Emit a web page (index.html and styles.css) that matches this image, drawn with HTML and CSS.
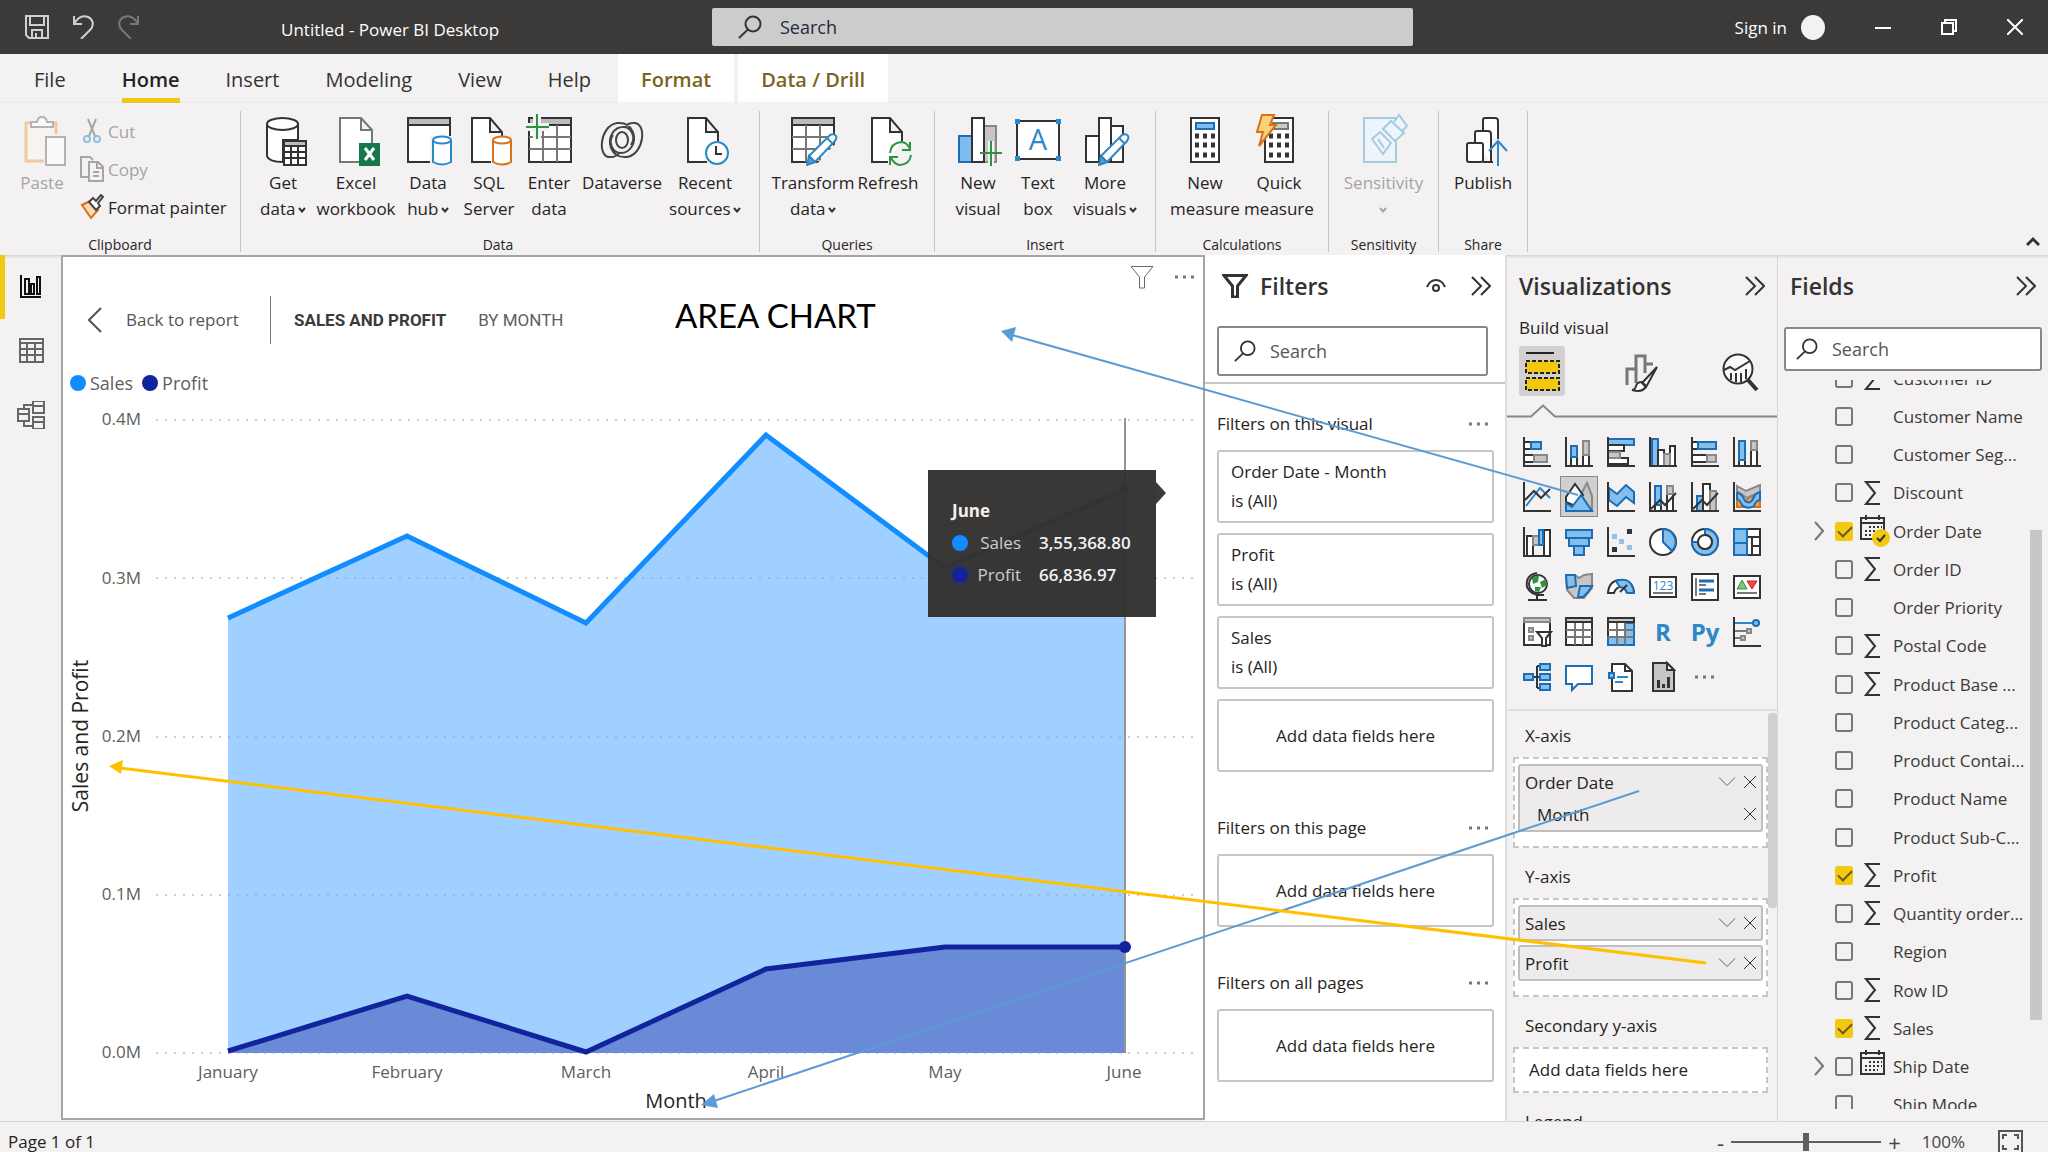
FILE: index.html
```html
<!DOCTYPE html>
<html lang="en">
<head>
    <meta charset="UTF-8">
    <meta name="viewport" content="width=device-width, initial-scale=1.0">
    <title>Untitled - Power BI Desktop</title>
    <link rel="stylesheet" href="styles.css">
</head>
<body>
    <!-- shared icons -->
    <svg class="sprite" aria-hidden="true">
        <symbol id="i-search" viewBox="0 0 24 24"><circle cx="15" cy="9" r="7.5"/><path d="M9.8 14.6 1 23"/></symbol>
        <symbol id="i-collapse" viewBox="0 0 20 20"><path d="M1 1l9 9-9 9M10 1l9 9-9 9"/></symbol>
        <symbol id="i-down" viewBox="0 0 18 12"><path d="M1 1.500l8 8 8-8"/></symbol>
        <symbol id="i-caret" viewBox="0 0 8 6"><path d="M1 1l3 3.500 3-3.500"/></symbol>
        <symbol id="i-x" viewBox="0 0 12 12"><path d="M0 0l12 12M12 0L0 12"/></symbol>
        <symbol id="i-more" viewBox="0 0 20 4"><path d="M0 .5h3v3H0zM8 .5h3v3H8zM16 .5h3v3h-3z"/></symbol>
        <symbol id="i-sigma" viewBox="0 0 18 24"><path d="M16 1H2l9 11-9 11h14"/></symbol>
        <symbol id="i-expand" viewBox="0 0 10 20"><path d="M1 1l8 9-8 9"/></symbol>
        <symbol id="i-funnel" viewBox="0 0 24 24"><path d="M1 1.500h22L14.500 12v11h-5V12z"/></symbol>
        <symbol id="i-calendar" viewBox="0 0 26 26">
            <path d="M1 3h23v21H1zM1 8h23M6 0v5M19 0v5"/>
            <path stroke-dasharray="2 2" d="M9 12h13M5 16h17M5 20h13"/>
        </symbol>
        <symbol id="i-pen" viewBox="0 0 32 34">
            <path fill="#fff" stroke="#2f86c6" stroke-width="2" d="M3 24 24 3q4-2 6 1 1 2-1 5L9 30z"/>
            <path fill="#5b9bd0" stroke="#2f86c6" stroke-width="2" d="M3 24l6 6-8 3z"/>
            <path fill="none" stroke="#2f86c6" stroke-width="2" d="M21 6l6 6"/>
        </symbol>
    </svg>

    <header class="titlebar">
        <div class="quick">
            <button aria-label="Save"><svg viewBox="0 0 24 24"><path d="M1 1h22v22H4l-3-3zM5 1v9h14V1M7 23v-8h10v8M11 18v5"/></svg></button>
            <button aria-label="Undo"><svg viewBox="0 0 24 24"><path d="M3 1v8h8M3 9C7 2 12 0 17 2c6 3 6 9 2 13l-9 9"/></svg></button>
            <button class="dim" aria-label="Redo"><svg viewBox="0 0 24 24"><path d="M21 1v8h-8M21 9C17 2 12 0 7 2c-6 3-6 9-2 13l9 9"/></svg></button>
        </div>
        <div class="doc-title">Untitled - Power BI Desktop</div>
        <label class="top-search">
            <svg><use href="#i-search"/></svg>
            <input type="text" placeholder="Search" aria-label="Search">
        </label>
        <div class="account">
            <button class="signin">Sign in <span class="avatar"></span></button>
            <button aria-label="Minimize"><svg viewBox="0 0 16 16"><path d="M0 9h16"/></svg></button>
            <button aria-label="Restore"><svg viewBox="0 0 16 16"><path d="M1 4h11v11H1zM4 4V1h11v11h-3"/></svg></button>
            <button aria-label="Close"><svg viewBox="0 0 16 16"><path d="M0 0l16 16M16 0L0 16"/></svg></button>
        </div>
    </header>

    <nav class="tabs">
        <a href="#" class="file">File</a>
        <a href="#" class="active"><span>Home</span></a>
        <a href="#">Insert</a>
        <a href="#">Modeling</a>
        <a href="#">View</a>
        <a href="#">Help</a>
        <a href="#" class="context">Format</a>
        <a href="#" class="context">Data / Drill</a>
    </nav>

    <div class="ribbon">
        <section class="group clipboard">
            <div class="tools">
                <button class="tool off">
                    <svg viewBox="0 0 48 52">
                        <path fill="#f7f3ee" stroke="#f0c9a0" stroke-width="3" d="M38 20V9H8v38h18"/>
                        <path fill="#fafafa" stroke="#b5b3b1" stroke-width="2" d="M13 13V8h6q1-5 5-5t5 5h6v5z"/>
                        <path fill="#fafafa" stroke="#b5b3b1" stroke-width="2" d="M28 23h19v28H28z"/>
                    </svg>
                    <span>Paste</span>
                </button>
                <div class="stack">
                    <button class="off"><svg viewBox="0 0 24 26"><path stroke="#a8a6a4" d="M8 1l7 17M16 1L9 18"/><g stroke="#8fc0e4"><circle cx="7" cy="21" r="3"/><circle cx="17" cy="21" r="3"/></g></svg>Cut</button>
                    <button class="off"><svg viewBox="0 0 24 26"><path stroke="#a8a6a4" d="M9 21H1V1h9l3 3M9 6h9l5 5v14H9zM17 6v6h6M13 16h6M13 20h6"/></svg>Copy</button>
                    <button><svg viewBox="0 0 24 26"><path fill="#fbd9b4" stroke="#d9701a" stroke-width="2" d="M2 11l8-4 8 9-7 8z"/><path fill="#fff" stroke="#444" d="M9 8l4-4 3 3 5-6 2 2-5 6 2 3-4 4z"/></svg>Format painter</button>
                </div>
            </div>
            <h3>Clipboard</h3>
        </section>

        <section class="group data">
            <div class="tools">
                <button class="tool">
                    <svg viewBox="0 0 48 52">
                        <g class="ln"><path d="M8 10v32q2 6 16 6V26h15V10"/><ellipse cx="23.500" cy="10" rx="15.500" ry="6"/></g>
                        <path fill="#fff" stroke="#333" stroke-width="2" d="M25 27h22v24H25zM25 38h22M25 44h22M32 32v19M39 32v19"/><path fill="#bbb" stroke="#333" stroke-width="2" d="M25 27h22v5H25z"/>
                    </svg>
                    <span>Get<br>data <svg class="caret"><use href="#i-caret"/></svg></span>
                </button>
                <button class="tool">
                    <svg viewBox="0 0 48 52">
                        <path fill="#fff" stroke="#777" stroke-width="2" d="M27 48H8V4h21l11 12v13M29 4v12h11"/>
                        <path fill="#14794a" stroke="none" d="M27 29h21v23H27z"/><path stroke="#fff" stroke-width="3" d="M33 34l9 12M42 34l-9 12"/>
                    </svg>
                    <span>Excel<br>workbook</span>
                </button>
                <button class="tool">
                    <svg viewBox="0 0 48 52">
                        <g class="ln"><path d="M4 4h42v44H4z"/><path fill="#bbb" d="M4 4h42v7H4z"/></g>
                        <path fill="#fff" stroke="#f3f1f1" stroke-width="6" d="M29 25h18v26H29z"/>
                        <path fill="#fff" stroke="#2b88c9" stroke-width="2" d="M29 26v22q9 5 18 0V26"/><ellipse cx="38" cy="26" rx="9" ry="3.500" fill="#fff" stroke="#2b88c9" stroke-width="2"/>
                    </svg>
                    <span>Data<br>hub <svg class="caret"><use href="#i-caret"/></svg></span>
                </button>
                <button class="tool">
                    <svg viewBox="0 0 48 52">
                        <g class="ln"><path d="M26 48H7V4h18l12 14v4M25 4v14h12"/></g>
                        <path fill="#fff" stroke="#d9701a" stroke-width="2" d="M28 26v22q9 5 18 0V26"/><ellipse cx="37" cy="26" rx="9" ry="3.500" fill="#fff" stroke="#d9701a" stroke-width="2"/>
                    </svg>
                    <span>SQL<br>Server</span>
                </button>
                <button class="tool">
                    <svg viewBox="0 0 48 52">
                        <g class="ln"><path d="M4 4h42v44H4z"/><path fill="#bbb" d="M4 4h42v7H4z"/><path stroke="#777" d="M4 23h42M4 35h42M18 11v37M32 11v37"/></g>
                        <path stroke="#f3f1f1" stroke-width="8" d="M12 0v25M0 13h24"/>
                        <path stroke="#2c9342" stroke-width="2" d="M12 0v25M1 13h23"/>
                    </svg>
                    <span>Enter<br>data</span>
                </button>
                <button class="tool">
                    <svg viewBox="0 0 48 52">
                        <g fill="none" stroke="#444" stroke-width="2">
                            <ellipse cx="24" cy="26" rx="6" ry="8"/>
                            <path d="M13 43C-1 45 1 12 19 9q12-1 16 9c4 12-4 21-12 21-9 0-13-11-8-18M35 9c14-2 12 31-6 34q-12 1-16-9C9 22 17 13 25 13c9 0 13 11 8 18M13 43q5 0 8-4M35 9q-5 0-8 4"/>
                        </g>
                    </svg>
                    <span>Dataverse</span>
                </button>
                <button class="tool">
                    <svg viewBox="0 0 48 52">
                        <g class="ln"><path d="M26 48H7V4h18l12 14v9M25 4v14h12"/></g>
                        <circle cx="36" cy="39" r="11" fill="#fff" stroke="#2b88c9" stroke-width="2"/><path fill="none" stroke="#333" stroke-width="2" d="M35 32v8h6"/>
                    </svg>
                    <span>Recent<br>sources <svg class="caret"><use href="#i-caret"/></svg></span>
                </button>
            </div>
            <h3>Data</h3>
        </section>

        <section class="group queries">
            <div class="tools">
                <button class="tool">
                    <svg viewBox="0 0 48 52">
                        <g class="ln"><path d="M3 4h42v44H3z"/><path fill="#bbb" d="M3 4h42v7H3z"/><path stroke="#777" d="M3 23h42M3 35h42M17 11v37M31 11v37"/></g>
                        <path fill="#f3f1f1" stroke="none" d="M26 52 48 28v24z"/>
                        <use href="#i-pen" x="17" y="18" width="32" height="34"/>
                    </svg>
                    <span>Transform<br>data <svg class="caret"><use href="#i-caret"/></svg></span>
                </button>
                <button class="tool">
                    <svg viewBox="0 0 48 52">
                        <g class="ln"><path d="M24 48H8V4h18l12 14v9M26 4v14h12"/></g>
                        <path fill="none" stroke="#2c9342" stroke-width="2" d="M26 39q1-10 11-11 6 0 9 7M46 28v8h-8M47 41q-1 9-11 10-5 0-9-7M26 51v-8h8"/>
                    </svg>
                    <span>Refresh</span>
                </button>
            </div>
            <h3>Queries</h3>
        </section>

        <section class="group insert">
            <div class="tools">
                <button class="tool">
                    <svg viewBox="0 0 48 52">
                        <path fill="#7dbcee" stroke="#1b6eb5" stroke-width="2" d="M5 22h13v26H5z"/>
                        <path fill="#c8c6c4" stroke="#8a8886" stroke-width="2" d="M30 12h12v36H30z"/>
                        <path fill="#fff" stroke="#333" stroke-width="2" d="M18 4h12v44H18z"/>
                        <path stroke="#f3f1f1" stroke-width="6" d="M37 27v24"/><path stroke="#2c9342" stroke-width="2" d="M37 27v25M26 39h22"/>
                    </svg>
                    <span>New<br>visual</span>
                </button>
                <button class="tool">
                    <svg viewBox="0 0 48 52">
                        <g class="ln"><path d="M3 7h42v38H3z"/></g>
                        <path fill="#2b88c9" stroke="none" d="M1 5h5v5H1zM42 5h5v5h-5zM1 42h5v5H1zM42 42h5v5h-5z"/>
                        <text x="24" y="36" text-anchor="middle" font-size="29" fill="#2b88c9">A</text>
                    </svg>
                    <span>Text<br>box</span>
                </button>
                <button class="tool">
                    <svg viewBox="0 0 48 52">
                        <g class="ln"><path d="M5 22h13v26H5zM30 12h12v36H30zM18 4h12v44H18z"/></g>
                        <use href="#i-pen" x="17" y="18" width="32" height="34"/>
                    </svg>
                    <span>More<br>visuals <svg class="caret"><use href="#i-caret"/></svg></span>
                </button>
            </div>
            <h3>Insert</h3>
        </section>

        <section class="group calc">
            <div class="tools">
                <button class="tool">
                    <svg viewBox="0 0 48 52">
                        <g class="ln"><path d="M10 4h28v44H10z"/></g>
                        <path fill="#7dbcee" stroke="#1b6eb5" stroke-width="2" d="M15 9h18v6H15z"/>
                        <path stroke="#333" stroke-width="5" stroke-dasharray="4 4" d="M14 22h20M14 31h20M14 41h20"/>
                    </svg>
                    <span>New<br>measure</span>
                </button>
                <button class="tool">
                    <svg viewBox="0 0 48 52">
                        <g class="ln"><path d="M10 4h28v44H10z"/></g>
                        <path fill="#ccc" stroke="#777" stroke-width="2" d="M18 9h15v6H18z"/>
                        <path stroke="#333" stroke-width="5" stroke-dasharray="4 4" d="M14 22h20M14 31h20M14 41h20"/>
                        <path fill="#fbd27a" stroke="#d9701a" stroke-width="2" d="M7 1h12l-4 10h6L4 32l4-14H2z"/>
                    </svg>
                    <span>Quick<br>measure</span>
                </button>
            </div>
            <h3>Calculations</h3>
        </section>

        <section class="group sensitivity">
            <div class="tools">
                <button class="tool off">
                    <svg viewBox="0 0 48 52">
                        <g fill="#eef5fa" stroke="#a5cbe2" stroke-width="2">
                            <path d="M4 4h32v44H4z"/><path d="M23 15l8-8 13 12-9 8zM34 8l5-7 8 11-5 5M20 18l11 11-8 11-11-15zM18 25l6 9"/>
                        </g>
                    </svg>
                    <span>Sensitivity<br><svg class="caret"><use href="#i-caret"/></svg></span>
                </button>
            </div>
            <h3>Sensitivity</h3>
        </section>

        <section class="group share">
            <div class="tools">
                <button class="tool">
                    <svg viewBox="0 0 48 52">
                        <g class="ln"><path d="M24 17V6q0-2 2-2h10q3 0 3 3v18M16 29V19q0-2 2-2h11q3 0 3 3v28"/><rect x="8" y="29" width="16" height="19" rx="2"/><path d="M24 48h10"/></g>
                        <path stroke="#f3f1f1" stroke-width="6" d="M39 30v22"/><path fill="none" stroke="#2b88c9" stroke-width="2" d="M39 52V27M30 37l9-10 9 10"/>
                    </svg>
                    <span>Publish</span>
                </button>
            </div>
            <h3>Share</h3>
        </section>
        <button class="fold" aria-label="Collapse ribbon"><svg viewBox="0 0 14 10"><path d="M1 9l6-6 6 6"/></svg></button>
    </div>

    <main class="workspace">
        <aside class="rail">
            <button class="on" aria-label="Report view"><svg viewBox="0 0 28 28"><path d="M4 2v22h20"/><path d="M8 6h4v15H8zM14 11h3v10h-3zM20 4h3v17h-3z"/></svg></button>
            <button aria-label="Data view"><svg viewBox="0 0 28 28"><path d="M3 2h23v23H3zM3 6h23M3 12h23M3 18h23M10 6v19M18 6v19"/></svg></button>
            <button aria-label="Model view"><svg viewBox="0 0 28 28"><path d="M16 0h11v12H16zM16 5h11M16 16h11v12H16zM16 21h11M1 8h11v12H1zM1 13h11M7 8V4h9M7 20v5h9"/></svg></button>
        </aside>

        <section class="canvas">
            <div class="visual-tools">
                <button aria-label="Filters on visual"><svg class="funnel"><use href="#i-funnel"/></svg></button>
                <button aria-label="More options"><svg class="more"><use href="#i-more"/></svg></button>
            </div>
            <div class="focus-head">
                <button class="back"><svg viewBox="0 0 14 26"><path d="M13 1L1 13l12 12"/></svg>Back to report</button>
                <div class="crumbs"><b>SALES AND PROFIT</b><span>BY MONTH</span></div>
                <h1>AREA CHART</h1>
            </div>
            <div class="legend"><i class="sales"></i>Sales <i class="profit"></i>Profit</div>
            <div class="plot">
                <svg class="chart" viewBox="63 400 1140 718" role="img" aria-label="Sales and Profit by Month">
                    <path class="area-sales" d="M228 618 407 536 586 623 766 435 945 568 1124 490V1053H228z"/>
                    <path class="area-profit" d="M228 1051 407 996 586 1052 766 969 945 947H1124V1053H228z"/>
                    <path class="grid" d="M156 420H1196M156 578H1196M156 737H1196M156 895H1196M156 1053H1196"/>
                    <path class="hover-line" d="M1125 418V1053"/>
                    <path class="line-sales" d="M228 618 407 536 586 623 766 435 945 568 1124 490"/>
                    <path class="line-profit" d="M228 1051 407 996 586 1052 766 969 945 947H1124"/>
                    <circle cx="1124" cy="490" r="5" fill="#118dff"/>
                    <circle cx="1125" cy="947" r="6" fill="#12239e"/>
                    <g class="ticks" text-anchor="end">
                        <text x="141" y="425">0.4M</text>
                        <text x="141" y="584">0.3M</text>
                        <text x="141" y="742">0.2M</text>
                        <text x="141" y="900">0.1M</text>
                        <text x="141" y="1058">0.0M</text>
                    </g>
                    <g class="ticks" text-anchor="middle">
                        <text x="228" y="1078">January</text>
                        <text x="407" y="1078">February</text>
                        <text x="586" y="1078">March</text>
                        <text x="766" y="1078">April</text>
                        <text x="945" y="1078">May</text>
                        <text x="1124" y="1078">June</text>
                    </g>
                    <text class="axis" text-anchor="middle" x="676" y="1108">Month</text>
                    <text class="axis y" text-anchor="middle" transform="translate(88 736) rotate(-90)">Sales and Profit</text>
                </svg>
                <div class="tooltip">
                    <strong>June</strong>
                    <dl>
                        <dt><i class="sales"></i>Sales</dt><dd>3,55,368.80</dd>
                        <dt><i class="profit"></i>Profit</dt><dd>66,836.97</dd>
                    </dl>
                </div>
            </div>
        </section>

        <aside class="filters">
            <div class="pane-head">
                <svg class="funnel"><use href="#i-funnel"/></svg>
                <h2>Filters</h2>
                <button aria-label="Preview"><svg class="eye" viewBox="0 0 20 14"><path d="M1 8q3-7 9-7t9 7"/><circle cx="10" cy="9" r="3"/></svg></button>
                <button aria-label="Collapse filters"><svg class="collapse"><use href="#i-collapse"/></svg></button>
            </div>
            <label class="search"><svg><use href="#i-search"/></svg><input type="text" placeholder="Search" aria-label="Search filters"></label>
            <div class="filter-list">
                <h4>Filters on this visual <svg class="more"><use href="#i-more"/></svg></h4>
                <div class="card">Order Date - Month<br>is (All)</div>
                <div class="card">Profit<br>is (All)</div>
                <div class="card">Sales<br>is (All)</div>
                <div class="card add">Add data fields here</div>
                <h4>Filters on this page <svg class="more"><use href="#i-more"/></svg></h4>
                <div class="card add">Add data fields here</div>
                <h4>Filters on all pages <svg class="more"><use href="#i-more"/></svg></h4>
                <div class="card add">Add data fields here</div>
            </div>
        </aside>

        <aside class="visuals">
            <div class="pane-head">
                <h2>Visualizations</h2>
                <button aria-label="Collapse visualizations"><svg class="collapse"><use href="#i-collapse"/></svg></button>
            </div>
            <div class="sub">Build visual</div>
            <div class="modes">
                <button class="on" aria-label="Build visual"><svg viewBox="0 0 40 44"><path stroke="#222" stroke-width="2" d="M4 4h28"/><path fill="#f2c811" stroke="#222" stroke-width="2" stroke-dasharray="4 2" d="M4 12h33v12H4zM4 29h33v12H4z"/></svg></button>
                <button aria-label="Format visual"><svg viewBox="0 0 40 44"><path fill="none" stroke="#777" stroke-width="3" d="M6 36V20h9V7h9v8h8M15 20v14M24 15v9"/><path fill="#fff" stroke="#333" stroke-width="2" d="M36 18 21 34l4 4zM21 33q-5 0-6 4-1 4-4 4 11 3 14-4z"/></svg></button>
                <button aria-label="Analytics"><svg viewBox="0 0 40 44"><circle cx="18" cy="20" r="14.500" fill="#fafafa" stroke="#333" stroke-width="2"/><path stroke="#333" stroke-width="4" d="M28 31l9 10"/><path fill="none" stroke="#333" stroke-width="2" d="M4 21l6-3 5 3 15-9M11 31v-7M16 33V24M21 33V24M26 30V20"/></svg></button>
            </div>
            <svg class="notch" viewBox="0 0 270 14" preserveAspectRatio="xMinYMin slice"><path d="M0 12.500h24l12-11 12 11h252"/></svg>
            <div class="gallery">
                <button aria-label="Stacked bar chart"><svg viewBox="0 0 28 30"><path class="w" d="M1 5h8v7H1zM1 18h11v7H1z"/><path class="b" d="M8 5h10v7H8z"/><path class="g" d="M11 18h13v7H11z"/><path class="a" d="M1 0v29h27"/></svg></button>
                <button aria-label="Stacked column chart"><svg viewBox="0 0 28 30"><path class="w" d="M6 20h6v9H6zM18 17h6v12h-6z"/><path class="b" d="M6 9h6v11H6z"/><path class="g" d="M18 4h6v14h-6z"/><path class="a" d="M1 0v29h27"/></svg></button>
                <button aria-label="Clustered bar chart"><svg viewBox="0 0 28 30"><path class="b" d="M1 2h26v6H1z"/><path class="w" d="M1 8h16v6H1zM1 21h20v6H1z"/><path class="g" d="M1 15h12v6H1z"/><path class="a" d="M1 0v29h27"/></svg></button>
                <button aria-label="Clustered column chart"><svg viewBox="0 0 28 30"><path class="b" d="M3 2h6v27H3z"/><path class="w" d="M9 13h6v16H9zM21 9h5v20h-5z"/><path class="g" d="M15 17h6v12h-6z"/><path class="a" d="M1 0v29h27"/></svg></button>
                <button aria-label="100% stacked bar chart"><svg viewBox="0 0 28 30"><path class="w" d="M1 5h7v7H1zM1 18h16v7H1z"/><path class="b" d="M7 5h18v7H7z"/><path class="g" d="M16 18h9v7h-9z"/><path class="a" d="M1 0v29h27"/></svg></button>
                <button aria-label="100% stacked column chart"><svg viewBox="0 0 28 30"><path class="w" d="M6 22h6v7H6zM18 12h6v17h-6z"/><path class="b" d="M6 4h6v19H6z"/><path class="g" d="M18 4h6v9h-6z"/><path class="a" d="M1 0v29h27"/></svg></button>

                <button aria-label="Line chart"><svg viewBox="0 0 28 30"><path class="bl" d="M3 24 17 6l10 10"/><path class="a" d="M1 0v29h27M2 18l9-9 7 7 9-9"/></svg></button>
                <button class="on" aria-label="Area chart"><svg viewBox="0 0 28 30"><path class="g" d="M14 16l8-15 5 13v14z"/><path class="w" d="M1 15 10 2l8 11-8 11-9-4z"/><path class="b" d="M1 21l6 4 9-12 11 16H1z"/></svg></button>
                <button aria-label="Stacked area chart"><svg viewBox="0 0 28 30"><path class="b" d="M2 6l8 6 9-9 8 7v11l-8-6-9 9-8-6z"/><path class="a" d="M1 0v29h27"/></svg></button>
                <button aria-label="Line and stacked column chart"><svg viewBox="0 0 28 30"><path class="w" d="M6 20h6v9H6zM18 12h6v17h-6z"/><path class="b" d="M6 4h6v19H6z"/><path class="g" d="M18 4h6v8h-6z"/><path class="a" d="M1 0v29h27M2 27l9-9 5 5 11-12"/></svg></button>
                <button aria-label="Line and clustered column chart"><svg viewBox="0 0 28 30"><path class="b" d="M6 14h6v15H6z"/><path class="w" d="M12 2h7v27h-7z"/><path class="g" d="M19 9h6v20h-6z"/><path class="a" d="M1 0v29h27M2 27l9-9 5 5 11-12"/></svg></button>
                <button aria-label="Ribbon chart"><svg viewBox="0 0 28 30"><path fill="#f0a14a" stroke="#d9701a" stroke-width="2" d="M4 15l6 6 8-7 9 6v5H4z"/><path class="g" d="M4 4l9 5 14-6v7l-13 6L4 9z"/><path class="b" d="M4 11q5 0 8 8 5 4 8-2 2-6 7-7v8q-4 0-6 6-7 4-12-1-3-6-5-6z"/><path class="a" d="M1 0v29h27"/></svg></button>

                <button aria-label="Waterfall chart"><svg viewBox="0 0 28 30"><path class="w" d="M4 9h6v20H4zM21 3h6v26h-6z"/><path class="g" d="M10 9h6v9h-6z"/><path class="b" d="M16 3h4v15h-4z"/><path class="a" d="M1 0v29h27"/></svg></button>
                <button aria-label="Funnel"><svg viewBox="0 0 28 30"><path class="b" d="M1 3h26v8H1zM4 11h20v8H4zM9 19h10v9H9z"/></svg></button>
                <button aria-label="Scatter chart"><svg viewBox="0 0 28 30"><path fill="#8fc3ec" stroke="none" d="M5 7h5v5H5zM12 12h5v5h-5zM20 18h5v5h-5z"/><path fill="#333" stroke="none" d="M20 2h5v5h-5zM5 20h5v5H5z"/><path class="a" d="M1 0v29h27"/></svg></button>
                <button aria-label="Pie chart"><svg viewBox="0 0 28 30"><circle class="w" cx="14" cy="15" r="13"/><path class="b" d="M14 2a13 13 0 0 1 9 22l-9-9z"/></svg></button>
                <button aria-label="Donut chart"><svg viewBox="0 0 28 30"><circle class="w" cx="14" cy="15" r="13"/><path class="b" d="M14 2a13 13 0 1 1-13 13h6a7 7 0 1 0 7-7z"/><circle class="w" cx="14" cy="15" r="7"/></svg></button>
                <button aria-label="Treemap"><svg viewBox="0 0 28 30"><path class="w" d="M1 2h26v26H1zM14 10h13M19 10v18M19 19h8"/><path class="b" d="M1 2h13v26H1zM1 16h13"/></svg></button>

                <button aria-label="Map"><svg viewBox="0 0 28 30"><circle class="w" cx="15" cy="12" r="9"/><path fill="#2c9342" stroke="none" d="M9 6l7-3-1 7-5 2zM17 10l6-3 1 6-5 3zM12 15l6 0-2 5-4-1z"/><path class="a" d="M14 1Q2 3 4 15q4 9 17 8M14 22v6M5 28h19"/></svg></button>
                <button aria-label="Filled map"><svg viewBox="0 0 28 30"><path class="g" d="M1 3h9l4 3 5-3 8-1v14l-8 10H9L2 18z"/><path class="b" d="M1 3h9l1 11-9 2zM15 14h12l-4 6-5 5h-5z"/></svg></button>
                <button aria-label="Gauge"><svg viewBox="0 0 28 30"><path class="w" d="M1 21Q2 8 14 8q12 0 13 13h-7q-2-6-6-6-5 0-7 6z"/><path class="b" d="M9 9q16-5 18 12h-7q-2-6-7-6z"/><path class="a" d="M13 20l7-7"/></svg></button>
                <button aria-label="Card"><svg viewBox="0 0 28 30"><path class="w" d="M1 5h26v20H1z"/><text x="14" y="18" text-anchor="middle" font-size="12" fill="#2b88c9">123</text><path class="gl" d="M4 21h20"/></svg></button>
                <button aria-label="Multi-row card"><svg viewBox="0 0 28 30"><path class="w" d="M1 2h26v26H1z"/><path class="gl" d="M5 6v18M8 13h7M8 22h7"/><path stroke="#1b6eb5" stroke-width="3" d="M8 9h15M8 18h15"/></svg></button>
                <button aria-label="KPI"><svg viewBox="0 0 28 30"><path class="w" d="M1 4h26v22H1z"/><path fill="#7cc68a" stroke="#2c9342" d="M4 17l5-9 5 9z"/><path fill="#f04a4a" stroke="#c22" d="M14 9h10l-5 8z"/><path class="gl" d="M4 21h20"/></svg></button>

                <button aria-label="Slicer"><svg viewBox="0 0 28 30"><path class="w" d="M1 1h26v27H1z"/><path class="g" d="M1 1h26v4H1zM6 11h4v4H6zM6 19h4v4H6z"/><path class="w" d="M14 15h14l-5 6v8h-4v-8z"/></svg></button>
                <button aria-label="Table"><svg viewBox="0 0 28 30"><path class="w" d="M1 1h26v27H1z"/><path class="gl" d="M1 13h26M1 20h26M10 5v23M18 5v23"/><path class="a g" d="M1 1h26v4H1z"/></svg></button>
                <button aria-label="Matrix"><svg viewBox="0 0 28 30"><path class="w" d="M1 1h26v27H1z"/><path class="b" d="M18 6h9v22H1v-8h17z"/><path class="gl" d="M1 13h26M1 20h26M10 5v23M18 5v23"/><path class="a g" d="M1 1h26v4H1z"/></svg></button>
                <button class="glyph" aria-label="R script visual">R</button>
                <button class="glyph" aria-label="Python visual">Py</button>
                <button aria-label="Key influencers"><svg viewBox="0 0 28 30"><path class="bl" d="M2 6h18"/><circle class="b" cx="23" cy="6" r="3"/><path class="gl" d="M2 14h12M2 21h7"/><path class="g" d="M14 12h4v4h-4zM8 19h4v4H8z"/><path class="a" d="M1 0v29h27"/></svg></button>

                <button aria-label="Decomposition tree"><svg viewBox="0 0 28 30"><path class="a" d="M10 15h7M14 4v22M14 4h3M14 26h3"/><path class="b" d="M1 12h9v6H1zM17 2h10v6H17zM17 12h10v6H17zM17 22h10v6H17z"/></svg></button>
                <button aria-label="Q&amp;A"><svg viewBox="0 0 28 30"><path fill="#fff" stroke="#1b6eb5" stroke-width="2" d="M1 4h26v18H13l-6 6v-6H1z"/></svg></button>
                <button aria-label="Smart narrative"><svg viewBox="0 0 28 30"><path class="w" d="M5 2h13l7 7v20H5z"/><path class="a" d="M18 2v7h7"/><path class="b" d="M2 11h5v5H2z"/><path class="bl" d="M10 15h11M8 20h8"/></svg></button>
                <button aria-label="Paginated report"><svg viewBox="0 0 28 30"><path class="a g" d="M4 1h14l7 7v21H4z"/><path class="w" d="M18 1v7h7z"/><path fill="#333" stroke="none" d="M8 18h3v8H8zM13 22h3v4h-3zM18 15h3v11h-3z"/></svg></button>
                <button aria-label="Get more visuals"><svg class="more"><use href="#i-more"/></svg></button>
            </div>
            <div class="wells">
                <h4>X-axis</h4>
                <div class="well">
                    <div class="pill">
                        <div><span>Order Date</span><svg class="down"><use href="#i-down"/></svg><svg class="x"><use href="#i-x"/></svg></div>
                        <div class="child"><span>Month</span><svg class="x"><use href="#i-x"/></svg></div>
                    </div>
                </div>
                <h4>Y-axis</h4>
                <div class="well">
                    <div class="pill"><div><span>Sales</span><svg class="down"><use href="#i-down"/></svg><svg class="x"><use href="#i-x"/></svg></div></div>
                    <div class="pill"><div><span>Profit</span><svg class="down"><use href="#i-down"/></svg><svg class="x"><use href="#i-x"/></svg></div></div>
                </div>
                <h4>Secondary y-axis</h4>
                <div class="well empty">Add data fields here</div>
                <h4>Legend</h4>
                <div class="thumb"></div>
            </div>
        </aside>

        <aside class="fields">
            <div class="pane-head">
                <h2>Fields</h2>
                <button aria-label="Collapse fields"><svg class="collapse"><use href="#i-collapse"/></svg></button>
            </div>
            <label class="search"><svg><use href="#i-search"/></svg><input type="text" placeholder="Search" aria-label="Search fields"></label>
            <div class="field-list">
                <ul>
                    <li><label><input type="checkbox"><svg class="sigma"><use href="#i-sigma"/></svg><span>Customer ID</span></label></li>
                    <li><label><input type="checkbox"><i></i><span>Customer Name</span></label></li>
                    <li><label><input type="checkbox"><i></i><span>Customer Seg...</span></label></li>
                    <li><label><input type="checkbox"><svg class="sigma"><use href="#i-sigma"/></svg><span>Discount</span></label></li>
                    <li class="parent"><svg class="expand"><use href="#i-expand"/></svg><label><input type="checkbox" checked><svg class="cal" viewBox="0 0 30 32"><use href="#i-calendar" width="26" height="26"/><circle cx="21" cy="23" r="9" fill="#f2c811" stroke="none"/><path d="M17 23l3 3 5-6"/></svg><span>Order Date</span></label></li>
                    <li><label><input type="checkbox"><svg class="sigma"><use href="#i-sigma"/></svg><span>Order ID</span></label></li>
                    <li><label><input type="checkbox"><i></i><span>Order Priority</span></label></li>
                    <li><label><input type="checkbox"><svg class="sigma"><use href="#i-sigma"/></svg><span>Postal Code</span></label></li>
                    <li><label><input type="checkbox"><svg class="sigma"><use href="#i-sigma"/></svg><span>Product Base ...</span></label></li>
                    <li><label><input type="checkbox"><i></i><span>Product Categ...</span></label></li>
                    <li><label><input type="checkbox"><i></i><span>Product Contai...</span></label></li>
                    <li><label><input type="checkbox"><i></i><span>Product Name</span></label></li>
                    <li><label><input type="checkbox"><i></i><span>Product Sub-C...</span></label></li>
                    <li><label><input type="checkbox" checked><svg class="sigma"><use href="#i-sigma"/></svg><span>Profit</span></label></li>
                    <li><label><input type="checkbox"><svg class="sigma"><use href="#i-sigma"/></svg><span>Quantity order...</span></label></li>
                    <li><label><input type="checkbox"><i></i><span>Region</span></label></li>
                    <li><label><input type="checkbox"><svg class="sigma"><use href="#i-sigma"/></svg><span>Row ID</span></label></li>
                    <li><label><input type="checkbox" checked><svg class="sigma"><use href="#i-sigma"/></svg><span>Sales</span></label></li>
                    <li class="parent"><svg class="expand"><use href="#i-expand"/></svg><label><input type="checkbox"><svg class="cal" viewBox="0 0 30 32"><use href="#i-calendar" width="26" height="26"/></svg><span>Ship Date</span></label></li>
                    <li><label><input type="checkbox"><i></i><span>Ship Mode</span></label></li>
                </ul>
                <div class="thumb"></div>
            </div>
        </aside>
    </main>

    <footer class="status">
        <span>Page 1 of 1</span>
        <div class="zoom">
            <button aria-label="Zoom out">-</button>
            <input type="range" min="0" max="100" value="50" aria-label="Zoom">
            <button aria-label="Zoom in">+</button>
            <span>100%</span>
            <button aria-label="Fit to page"><svg viewBox="0 0 26 24"><path d="M1 1h23v22H1z"/><path d="M5 9V5h4M16 5h4v4M5 15v4h4M16 19h4v-4"/></svg></button>
        </div>
    </footer>

    <!-- callout arrows -->
    <svg class="callouts" viewBox="0 0 2048 1152" preserveAspectRatio="none" aria-hidden="true">
        <g stroke="#5b9bd5" stroke-width="2" fill="#5b9bd5">
            <path d="M1012 335 1578 495"/><path stroke="none" d="M1001 331l15-4-4 15z"/>
            <path d="M714 1101 1639 791"/><path stroke="none" d="M701 1105l13-11 4 14z"/>
        </g>
        <g stroke="#ffc000" stroke-width="3" fill="#ffc000">
            <path d="M120 768 1706 963"/><path stroke="none" d="M109 766l14-6-2 14z"/>
        </g>
    </svg>
</body>
</html>
```
FILE: styles.css
```css
* {
    box-sizing: border-box;
}
body {
    margin: 0;
    height: 100vh;
    display: grid;
    grid-template-rows: 54px 49px 152px minmax(0, 1fr) 30px;
    overflow: hidden;
    font-family: "Open Sans", "Noto Sans", sans-serif;
    font-size: 17px;
    color: #252423;
    background: #f3f1f1;
}
button {
    font: inherit;
    color: inherit;
    background: none;
    border: none;
    padding: 0;
    display: flex;
    align-items: center;
}
input {
    font: inherit;
    color: inherit;
    border: none;
    background: none;
    outline: none;
    min-width: 0;
}
h1, h2, h3, h4, ul, dl, dd {
    margin: 0;
    padding: 0;
    font-weight: normal;
}
svg {
    fill: none;
    stroke: #333;
    stroke-width: 1;
    flex: none;
}
svg text {
    stroke: none;
}
.sprite {
    position: absolute;
    width: 0;
    height: 0;
}

/* title bar */
.titlebar {
    display: grid;
    grid-template-columns: 281px 431px minmax(0, 701px) 1fr;
    align-items: center;
    background: #3b3a39;
    color: #fff;
}
.titlebar svg {
    stroke: #fff;
    stroke-width: 2;
}
.quick {
    display: flex;
    gap: 22px;
    padding-left: 25px;
}
.quick svg {
    width: 24px;
    height: 24px;
    stroke: #d0d0d0;
}
.quick .dim svg {
    stroke: #7a7978;
}
.doc-title {
    padding-top: 4px;
}
.top-search {
    display: flex;
    align-items: center;
    gap: 16px;
    height: 38px;
    padding-left: 26px;
    background: #cccccc;
    border-radius: 2px;
}
.top-search svg {
    width: 24px;
    height: 24px;
    stroke: #333;
}
.top-search input {
    color: #1f2a44;
    font-size: 18px;
    flex: 1;
}
input::placeholder {
    color: inherit;
    opacity: 1;
}
.account {
    display: flex;
    justify-content: flex-end;
    align-items: center;
    gap: 50px;
    padding-right: 25px;
}
.account svg {
    width: 16px;
    height: 16px;
}
.signin {
    gap: 14px;
}
.avatar {
    width: 24px;
    height: 25px;
    border-radius: 50%;
    background: #f3f2f1;
}

/* tabs */
.tabs {
    display: flex;
    padding-left: 11px;
    font-size: 20px;
}
.tabs a {
    padding: 0 23px;
    line-height: 52px;
    color: #333;
    text-decoration: none;
}
.tabs .file {
    margin-right: 10px;
}
.tabs .active {
    font-weight: 600;
    color: #252423;
}
.tabs .active span {
    display: block;
    height: 49px;
    border-bottom: 5px solid #f2c811;
}
.tabs .context {
    background: #fff;
    color: #7a6420;
    font-weight: 600;
    margin-left: 4px;
}

/* ribbon */
.ribbon {
    display: flex;
    padding: 8px 0 3px;
    box-shadow: 0 1px 3px #c8c6c4;
}
.group {
    display: flex;
    flex-direction: column;
    justify-content: space-between;
    border-right: 1px solid #c8c6c4;
    padding: 3px 12px 0;
}
.group h3 {
    font-size: 14px;
    line-height: 14px;
    text-align: center;
}
.tools {
    display: grid;
    grid-auto-flow: column;
    justify-content: center;
}
.clipboard {
    width: 241px;
    padding: 3px 0 0;
}
.clipboard .tools {
    grid-template-columns: 76px 1fr;
    justify-content: stretch;
    padding-left: 4px;
}
.data {
    padding-left: 5px;
    padding-right: 9px;
}
.data .tools {
    grid-template-columns: 74px 72px 72px 50px 70px 76px 90px;
}
.queries .tools {
    grid-template-columns: 82px 68px;
}
.insert .tools {
    grid-template-columns: 62px 58px 76px;
}
.calc .tools {
    grid-template-columns: 74px 74px;
}
.sensitivity {
    width: 110px;
}
.share {
    width: 89px;
}
.tool {
    flex-direction: column;
    line-height: 26px;
    white-space: nowrap;
    gap: 4px;
    height: 108px;
    justify-content: flex-start;
}
.tool > svg {
    width: 48px;
    height: 52px;
    overflow: visible;
}
.tool .ln {
    fill: #fff;
    stroke: #333;
    stroke-width: 2;
}
.tool .caret {
    width: 8px;
    height: 6px;
    stroke-width: 2;
    vertical-align: middle;
    margin-left: -2px;
}
.off {
    color: #a6a4a2;
}
.tool.off .caret {
    stroke: #a6a4a2;
}
.stack {
    display: flex;
    flex-direction: column;
    gap: 12px;
    padding-top: 4px;
}
.stack button {
    gap: 4px;
    height: 26px;
}
.stack svg {
    width: 24px;
    height: 26px;
    stroke-width: 2;
}
.fold {
    margin-left: auto;
    align-self: flex-end;
    padding: 0 8px 5px 0;
}
.fold svg {
    width: 14px;
    height: 12px;
    stroke-width: 3;
}

/* workspace */
.workspace {
    display: grid;
    grid-template-columns: 61px minmax(0, 1fr) 302px 271px 270px;
    min-height: 0;
    border-bottom: 1px solid #d8d6d4;
}
.rail button {
    height: 64px;
    width: 61px;
    justify-content: center;
    border-left: 5px solid transparent;
    padding-right: 4px;
}
.rail .on {
    border-left-color: #f2c811;
}
.rail svg {
    width: 28px;
    height: 28px;
    stroke: #666;
    stroke-width: 2;
}
.rail .on svg {
    stroke: #111;
}
.canvas {
    display: flex;
    flex-direction: column;
    min-height: 0;
    background: #fff;
    border: 2px solid #a6a4a6;
    margin-bottom: 1px;
}
.visual-tools {
    display: flex;
    justify-content: flex-end;
    gap: 20px;
    height: 35px;
    padding: 5px 7px 0 0;
}
.visual-tools .funnel {
    width: 24px;
    height: 24px;
    stroke: #6e6478;
}
.more {
    width: 22px;
    height: 4px;
    fill: #777;
    stroke: none;
}
.focus-head {
    display: flex;
    align-items: center;
    height: 55px;
    padding-left: 25px;
}
.back {
    gap: 24px;
    width: 183px;
    height: 48px;
    border-right: 1px solid #777;
    color: #555;
    font-size: 17px;
}
.back svg {
    width: 14px;
    height: 26px;
    stroke: #555;
    stroke-width: 2;
}
.crumbs {
    display: flex;
    gap: 32px;
    width: 404px;
    padding-left: 23px;
    font-family: Roboto, sans-serif;
    color: #605e5c;
}
.crumbs b {
    color: #3b3a39;
}
.focus-head h1 {
    align-self: flex-start;
    font-family: Lato, sans-serif;
    font-size: 33px;
    line-height: 46px;
    color: #000;
}
.legend {
    display: flex;
    align-items: center;
    gap: 4px;
    height: 53px;
    padding: 18px 0 0 7px;
    font-size: 18px;
    color: #605e5c;
}
.sales, .profit {
    width: 16px;
    height: 16px;
    border-radius: 50%;
    background: #118dff;
}
.profit {
    background: #12239e;
}
.legend .profit {
    margin-left: 5px;
}
.plot {
    position: relative;
    flex: 1;
    min-height: 0;
}
.chart {
    display: block;
    width: 100%;
    height: 100%;
}
.area-sales {
    fill: #a0d0ff;
    stroke: none;
}
.area-profit {
    fill: #688ad7;
    stroke: none;
}
.chart circle {
    stroke: none;
}
.grid {
    stroke: #9a9fb0;
    stroke-opacity: .5;
    stroke-width: 2;
    stroke-dasharray: 2 7;
}
.hover-line {
    stroke: #979593;
    stroke-width: 2;
}
.line-sales, .line-profit {
    stroke: #118dff;
    stroke-width: 5;
}
.line-profit {
    stroke: #12239e;
}
.ticks {
    font-size: 17px;
    fill: #605e5c;
}
.axis {
    font-size: 20px;
    fill: #252423;
}
.axis.y {
    font-size: 21px;
}
.tooltip {
    position: absolute;
    right: 47px;
    top: 70px;
    width: 228px;
    height: 147px;
    padding: 25px 24px;
    background: rgba(50, 48, 47, .96);
    color: #f3f2f1;
}
.tooltip::after {
    content: "";
    position: absolute;
    left: 100%;
    top: 12px;
    border: 11px solid transparent;
    border-left: 10px solid #3b3a39;
    border-right: 0;
}
.tooltip strong {
    display: block;
    line-height: 32px;
}
.tooltip dl {
    display: grid;
    grid-template-columns: 69px 1fr;
    column-gap: 18px;
    line-height: 32px;
}
.tooltip dt {
    display: flex;
    align-items: center;
    justify-content: space-between;
    color: #d0cecc;
}
.tooltip dd {
    font-weight: 600;
}

/* panes */
.pane-head {
    display: flex;
    align-items: center;
    height: 62px;
    padding-left: 12px;
    padding-right: 12px;
}
.pane-head h2 {
    flex: 1;
    font-size: 23px;
    font-weight: 600;
    line-height: 30px;
    color: #333;
}
.pane-head svg {
    stroke-width: 2;
}
.collapse {
    width: 20px;
    height: 20px;
}
.search {
    display: flex;
    align-items: center;
    gap: 12px;
    height: 44px;
    border: 2px solid #8a8886;
    border-radius: 3px;
    background: #fff;
    padding-left: 10px;
    font-size: 18px;
    color: #555;
}
.search svg {
    width: 22px;
    height: 24px;
    stroke-width: 2;
}
.search input {
    flex: 1;
}
h4 {
    font-size: 17px;
    line-height: 26px;
}
.filters {
    background: #fff;
    border-right: 2px solid #e1dfdd;
    overflow: hidden;
}
.filters .pane-head {
    gap: 12px;
    padding-left: 17px;
    padding-right: 14px;
}
.filters .pane-head .funnel {
    width: 26px;
    height: 24px;
    stroke-width: 3;
}
.filters .pane-head .eye {
    width: 20px;
    height: 14px;
    margin-right: 13px;
}
.filters .search {
    height: 50px;
    margin: 9px 17px 6px 12px;
    padding-left: 15px;
}
.filter-list {
    border-top: 2px solid #c8c6c4;
    padding: 27px 11px 0 12px;
}
.filter-list h4 {
    display: flex;
    justify-content: space-between;
    align-items: center;
    padding-right: 4px;
    margin-bottom: 13px;
}
.card {
    height: 73px;
    border: 2px solid #c8c6c4;
    border-radius: 3px;
    padding: 5px 12px;
    line-height: 29px;
    margin-bottom: 10px;
}
.add {
    text-align: center;
    padding-top: 20px;
    margin-bottom: 43px;
}
.visuals {
    display: flex;
    flex-direction: column;
    min-height: 0;
    overflow: hidden;
    border-right: 1px solid #d8d6d4;
}
.sub {
    padding-left: 12px;
    line-height: 22px;
}
.modes {
    display: flex;
    gap: 53px;
    padding: 7px 0 0 12px;
}
.modes button {
    width: 46px;
    height: 50px;
    justify-content: center;
    border-radius: 3px;
}
.modes svg {
    width: 40px;
    height: 44px;
}
.modes .on {
    background: #d2d0ce;
}
.notch {
    width: 100%;
    height: 14px;
    margin-top: 8px;
    stroke: #8a8886;
    stroke-width: 2;
}
.gallery {
    display: grid;
    grid-template-columns: repeat(6, 36px);
    grid-auto-rows: 39px;
    gap: 6px;
    padding: 14px 0 13px 12px;
    border-bottom: 2px solid #e1dfdd;
}
.gallery button {
    justify-content: center;
}
.gallery svg {
    width: 28px;
    height: 30px;
    overflow: visible;
}
.gallery .more {
    width: 24px;
    height: 4px;
}
.gallery .on {
    background: #d2d0ce;
    outline: 1px solid #8a8886;
}
.w {
    fill: #fff;
    stroke: #333;
    stroke-width: 2;
}
.b {
    fill: #83beec;
    stroke: #1b6eb5;
    stroke-width: 2;
}
.g {
    fill: #c8c6c4;
    stroke: #8a8886;
    stroke-width: 2;
}
.a {
    stroke: #333;
    stroke-width: 2;
}
.bl {
    stroke: #2b88c9;
    stroke-width: 2;
}
.gl {
    stroke: #777;
    stroke-width: 2;
}
.glyph {
    font-size: 24px;
    line-height: 30px;
    font-weight: 700;
    color: #2b88c9;
}
.wells {
    position: relative;
    flex: 1;
    min-height: 0;
    overflow: hidden;
    padding: 12px 9px 0 6px;
}
.wells h4 {
    padding-left: 12px;
    margin-bottom: 8px;
}
.well {
    border: 2px dashed #c8c6c4;
    background: #fff;
    padding: 5px 3px 14px;
    margin-bottom: 16px;
}
.pill {
    border: 2px solid #c0bebe;
    border-radius: 3px;
    background: #edebeb;
    padding: 0 5px;
}
.pill + .pill {
    margin-top: 4px;
}
.pill div {
    display: flex;
    align-items: center;
    gap: 8px;
    height: 32px;
}
.pill span {
    flex: 1;
}
.pill .child {
    padding-left: 12px;
}
.down {
    width: 18px;
    height: 12px;
    stroke: #666;
}
.x {
    width: 12px;
    height: 12px;
    overflow: visible;
}
.empty {
    height: 46px;
    padding: 6px 14px;
    line-height: 30px;
}
.thumb {
    position: absolute;
    right: 0;
    top: 2px;
    width: 9px;
    height: 195px;
    border-radius: 3px;
    background: #d2d0ce;
}
.fields {
    display: flex;
    flex-direction: column;
    min-height: 0;
}
.fields .search {
    margin: 10px 6px 9px 6px;
}
.field-list {
    position: relative;
    flex: 1;
    min-height: 0;
    overflow: hidden;
    margin-bottom: 12px;
}
.field-list ul {
    list-style: none;
    margin-top: -21px;
    padding-left: 36px;
}
.field-list li {
    display: flex;
    align-items: center;
    height: 38px;
    padding-left: 21px;
    color: #3b3a39;
}
.field-list li:nth-child(4n) {
    height: 39px;
}
.field-list .parent {
    padding-left: 0;
    gap: 11px;
}
.field-list label {
    display: grid;
    grid-template-columns: 18px 26px 1fr;
    column-gap: 7px;
    align-items: center;
    white-space: nowrap;
}
.field-list input {
    appearance: none;
    width: 18px;
    height: 19px;
    margin: 0;
    border: 2px solid #7a7876;
    border-radius: 3px;
}
.field-list input:checked {
    background: #f2c811;
    border-color: #f2c811;
}
.field-list input:checked::after {
    content: "";
    display: block;
    width: 12px;
    height: 6px;
    margin: 2px 1px;
    border-left: 2px solid #6b5a10;
    border-bottom: 2px solid #6b5a10;
    transform: rotate(-45deg);
}
.sigma {
    width: 18px;
    height: 24px;
    stroke-width: 2;
    justify-self: center;
}
.cal {
    width: 30px;
    height: 32px;
    stroke-width: 2;
}
.expand {
    width: 10px;
    height: 20px;
    stroke: #777;
    stroke-width: 2;
}
.fields .thumb {
    top: 150px;
    right: 6px;
    width: 12px;
    height: 490px;
    border-radius: 0;
    background: #c8c6c6;
}

/* status bar */
.status {
    display: flex;
    justify-content: space-between;
    padding: 0 24px 0 8px;
    line-height: 40px;
    height: 30px;
    overflow: hidden;
}
.zoom {
    display: flex;
    align-items: center;
    height: 40px;
    gap: 7px;
    color: #444;
}
.zoom button {
    font-size: 22px;
}
.zoom span {
    margin: 0 26px 0 14px;
}
.zoom input {
    appearance: none;
    width: 150px;
    height: 22px;
    margin: 0;
}
.zoom input::-webkit-slider-runnable-track {
    height: 2px;
    background: #605e5c;
}
.zoom input::-webkit-slider-thumb {
    appearance: none;
    width: 6px;
    height: 18px;
    margin-top: -8px;
    background: #605e5c;
}
.zoom svg {
    width: 26px;
    height: 24px;
    stroke: #555;
    stroke-width: 2;
}

.callouts {
    position: absolute;
    inset: 0;
    width: 100%;
    height: 100%;
    pointer-events: none;
}
```
